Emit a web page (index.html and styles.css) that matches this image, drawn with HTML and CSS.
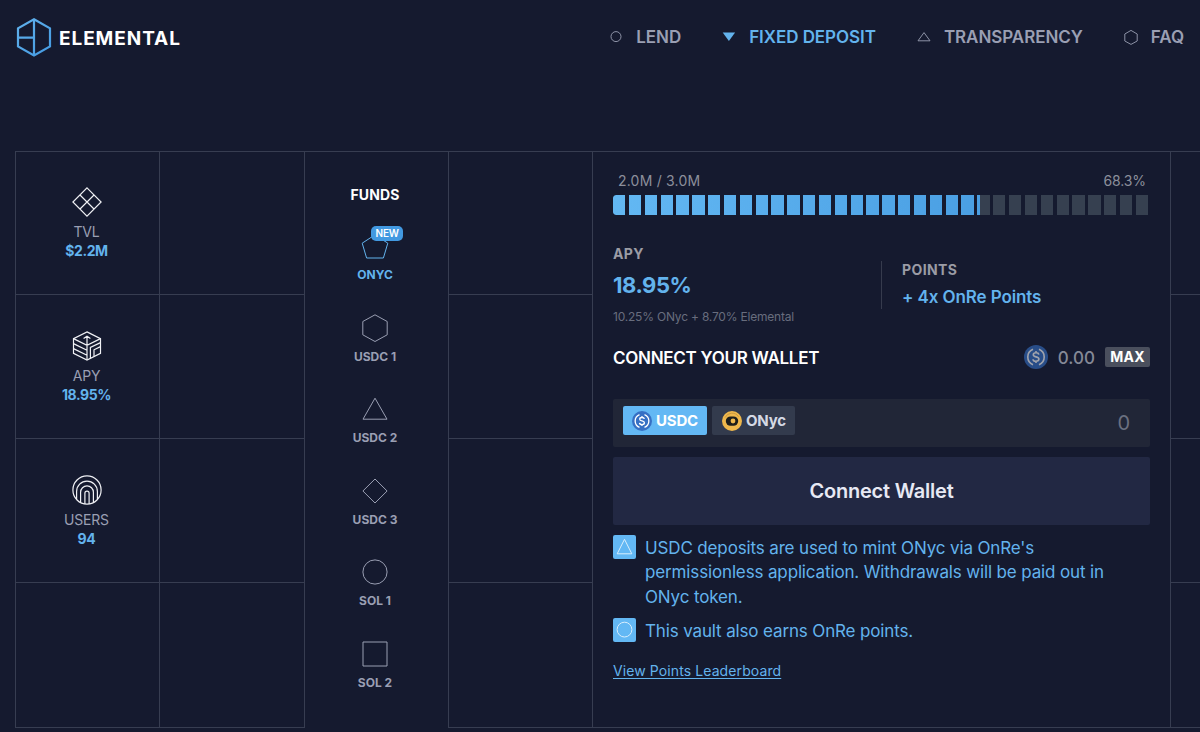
FILE: index.html
```html
<!DOCTYPE html>
<html lang="en">
<head>
    <meta charset="UTF-8">
    <meta name="viewport" content="width=device-width, initial-scale=1.0">
    <title>Elemental - Fixed Deposit</title>
    <link rel="stylesheet" href="styles.css">
</head>
<body>
    <header class="header">
        <a class="logo" href="#">
            <svg width="36" height="40" viewBox="0 0 36 40" fill="none" stroke="url(#logoFill)" stroke-width="2.2">
                <defs>
                    <linearGradient id="logoFill" gradientUnits="userSpaceOnUse" x1="0" y1="0" x2="36" y2="40">
                        <stop offset="0" stop-color="#63b3ed"/>
                        <stop offset="1" stop-color="#4299e1"/>
                    </linearGradient>
                </defs>
                <path d="M18 2.3 34 11.3V29.4L18 38.4 2 29.4V11.3Z"/>
                <path d="M18 2.3V38.4M2 20.7H18"/>
            </svg>
            <span>ELEMENTAL</span>
        </a>
        <nav class="nav">
            <a href="#">
                <svg width="14" height="14" viewBox="0 0 14 14"><circle cx="7" cy="6.6" r="5"/></svg>
                <span>LEND</span>
            </a>
            <a href="#" class="active">
                <svg width="14" height="14" viewBox="0 0 14 14"><path d="M.7 2.4h12.4L6.9 11Z"/></svg>
                <span>FIXED DEPOSIT</span>
            </a>
            <a href="#">
                <svg width="14" height="14" viewBox="0 0 14 14"><path d="M7 2.6 13 10.8H1Z"/></svg>
                <span>TRANSPARENCY</span>
            </a>
            <a href="#">
                <svg width="14" height="16" viewBox="0 0 14 16"><path d="M7 1.4 13.2 5V12L7 15.4.8 12V5Z"/></svg>
                <span>FAQ</span>
            </a>
        </nav>
    </header>

    <main class="board">
        <div class="col">
            <div class="cell stat">
                <svg width="30" height="30" viewBox="0 0 30 30"><path d="M15 .9 29.1 15 15 29.1.9 15ZM8 8l14 14M22 8 8 22"/></svg>
                <span class="stat-label">TVL</span>
                <strong>$2.2M</strong>
            </div>
            <div class="cell stat">
                <svg width="30" height="30" viewBox="0 0 30 30">
                    <path d="M15 .9 28.5 7.6V22.4L15 29.1 1.5 22.4V7.6Z"/>
                    <path d="M1.5 7.6 15 14.3 28.5 7.6M15 5.2V29M11.6 7.4 15 5.2 18.4 7.4M1.5 12.6 15 19.3M1.5 17.6 15 24.3M18.4 27.2V16.4L28.5 11.6M22 25.5V18.8L28.5 15.6"/>
                </svg>
                <span class="stat-label">APY</span>
                <strong>18.95%</strong>
            </div>
            <div class="cell stat">
                <svg width="30" height="30" viewBox="0 0 30 30">
                    <circle cx="15" cy="15" r="14.1"/>
                    <path d="M4.6 24.4V16.5a10.4 10.4 0 0 1 20.8 0V24.4M8.6 27.4V17.3a6.4 6.4 0 0 1 12.8 0V27.4M12.9 29V18.3a2.1 2.1 0 0 1 4.2 0V29"/>
                </svg>
                <span class="stat-label">USERS</span>
                <strong>94</strong>
            </div>
            <div class="cell"></div>
        </div>

        <div class="col">
            <div class="cell"></div>
            <div class="cell"></div>
            <div class="cell"></div>
            <div class="cell"></div>
        </div>

        <div class="col funds">
            <h2>FUNDS</h2>
            <a href="#" class="fund active">
                <svg width="28" height="28" viewBox="0 0 28 28"><path d="M14 2.8 26.8 11.2 22.4 26H5.6L1.2 11.2Z"/></svg>
                <em class="badge">NEW</em>
                <span>ONYC</span>
            </a>
            <a href="#" class="fund">
                <svg width="28" height="28" viewBox="0 0 28 28"><path d="M14 .8 26.2 7.5V20.8L14 27.5 1.8 20.8V7.5Z"/></svg>
                <span>USDC 1</span>
            </a>
            <a href="#" class="fund">
                <svg width="28" height="28" viewBox="0 0 28 28"><path d="M14 3.2 26 24.2H2Z"/></svg>
                <span>USDC 2</span>
            </a>
            <a href="#" class="fund">
                <svg width="28" height="28" viewBox="0 0 28 28"><path d="M14 2 26.1 14 14 26 1.9 14Z"/></svg>
                <span>USDC 3</span>
            </a>
            <a href="#" class="fund">
                <svg width="28" height="28" viewBox="0 0 28 28"><circle cx="14" cy="14" r="12.1"/></svg>
                <span>SOL 1</span>
            </a>
            <a href="#" class="fund">
                <svg width="28" height="28" viewBox="0 0 28 28"><path d="M2 2H26V26H2Z"/></svg>
                <span>SOL 2</span>
            </a>
        </div>

        <div class="col">
            <div class="cell"></div>
            <div class="cell"></div>
            <div class="cell"></div>
            <div class="cell"></div>
        </div>

        <section class="col panel">
            <div class="cap">
                <span>2.0M / 3.0M</span>
                <span class="cap-percent">68.3%</span>
            </div>
            <div class="progress"><div class="progress-fill" style="width: 68.3%"></div></div>

            <div class="rates">
                <div class="rate">
                    <h3>APY</h3>
                    <p class="rate-value">18.95%</p>
                    <p class="rate-note">10.25% ONyc + 8.70% Elemental</p>
                </div>
                <div class="points">
                    <h3>POINTS</h3>
                    <p class="points-value">+ 4x OnRe Points</p>
                </div>
            </div>

            <div class="wallet">
                <h4>CONNECT YOUR WALLET</h4>
                <svg class="coin dim" width="24" height="24" viewBox="0 0 24 24">
                    <circle class="coin-bg" cx="12" cy="12" r="12"/>
                    <path d="M9 4.3a8.3 8.3 0 0 0 0 15.4M15 4.3a8.3 8.3 0 0 1 0 15.4M14.8 9.6C14.6 8.3 13.5 7.8 12 7.8c-1.7 0-2.7.8-2.7 2 0 3 5.6 1.2 5.6 4.3 0 1.4-1.2 2.2-2.9 2.2-1.7 0-2.9-.7-3-2.1M12 6v1.8M12 16.3V18"/>
                </svg>
                <span class="balance">0.00</span>
                <button class="max">MAX</button>
            </div>

            <div class="amount">
                <button class="token active">
                    <svg class="coin" width="20" height="20" viewBox="0 0 24 24">
                        <circle class="coin-bg" cx="12" cy="12" r="12"/>
                        <path d="M9 4.3a8.3 8.3 0 0 0 0 15.4M15 4.3a8.3 8.3 0 0 1 0 15.4M14.8 9.6C14.6 8.3 13.5 7.8 12 7.8c-1.7 0-2.7.8-2.7 2 0 3 5.6 1.2 5.6 4.3 0 1.4-1.2 2.2-2.9 2.2-1.7 0-2.9-.7-3-2.1M12 6v1.8M12 16.3V18"/>
                    </svg>
                    <span>USDC</span>
                </button>
                <button class="token">
                    <svg width="20" height="20" viewBox="0 0 20 20">
                        <circle cx="10" cy="10" r="10" fill="#efb84c"/>
                        <path d="M3 6.6A7.8 7.8 0 0 1 16.6 5.8" fill="none" stroke="#b98a38" stroke-width=".7"/>
                        <rect x="3.8" y="5.4" width="12.4" height="9.4" rx="4.7" fill="#1d1e1b"/>
                        <circle cx="11" cy="10" r="2.4" fill="#efb84c"/>
                    </svg>
                    <span>ONyc</span>
                </button>
                <span class="amount-value">0</span>
            </div>

            <button class="connect">Connect Wallet</button>

            <div class="note">
                <svg width="23" height="24" viewBox="0 0 23 24"><path d="M11.5 4.3 18.8 18.8H4.2Z"/></svg>
                <p>USDC deposits are used to mint ONyc via OnRe's<br>permissionless application. Withdrawals will be paid out in<br>ONyc token.</p>
            </div>
            <div class="note">
                <svg width="23" height="24" viewBox="0 0 23 24"><circle cx="11.5" cy="11.6" r="7.4"/></svg>
                <p>This vault also earns OnRe points.</p>
            </div>
            <a class="leaderboard" href="#">View Points Leaderboard</a>
        </section>

        <div class="col">
            <div class="cell"></div>
            <div class="cell"></div>
            <div class="cell"></div>
            <div class="cell"></div>
        </div>
    </main>
</body>
</html>
```
FILE: styles.css
```css
:root {
    --bg: #151a2f;
    --line: #373d51;
    --blue: #63b3ed;
    --muted: #9a9fb3;
    --white: #ffffff;
}

* {
    margin: 0;
    padding: 0;
    box-sizing: border-box;
}

body {
    background: var(--bg);
    color: var(--white);
    font-family: Inter, "Liberation Sans", sans-serif;
    height: 732px;
    overflow: hidden;
}

a {
    color: inherit;
    text-decoration: none;
}

svg {
    display: block;
    flex: none;
}

button {
    border: none;
    color: inherit;
    font-family: inherit;
    cursor: pointer;
}

/* Header */
.header {
    display: flex;
    justify-content: space-between;
    align-items: center;
    height: 74px;
    padding: 0 16px;
    margin-bottom: 77px;
}

.logo {
    display: flex;
    align-items: center;
    gap: 7px;
    font-size: 19px;
    font-weight: 700;
    letter-spacing: 0.93px;
}

.logo span {
    padding-top: 2px;
}

.nav {
    display: flex;
    gap: 41px;
    font-size: 17px;
    font-weight: 600;
    line-height: 24px;
    letter-spacing: -0.05px;
    color: var(--muted);
}

.nav a {
    display: flex;
    align-items: center;
    gap: 13px;
}

.nav svg {
    fill: none;
    stroke: currentColor;
    stroke-width: 0.9;
}

.nav .active {
    color: var(--blue);
}

.nav .active svg {
    fill: currentColor;
    stroke: none;
}

/* Board */
.board {
    display: grid;
    grid-template-columns: 144px 145px 144px 144px 578px 1fr;
    height: 577px;
    margin-left: 15px;
    border-top: 1px solid var(--line);
}

.col {
    display: grid;
    grid-template-rows: 143px 144px 144px 145px;
    border-left: 1px solid var(--line);
    min-width: 0;
}

.cell {
    border-bottom: 1px solid var(--line);
}

/* Stats */
.stat {
    display: flex;
    flex-direction: column;
    align-items: center;
    padding: 36px 2px 0 0;
    font-size: 14px;
    line-height: 19px;
    letter-spacing: -0.2px;
}

.stat:first-child {
    padding-top: 35px;
}

.stat svg {
    fill: none;
    stroke: #f0f1f5;
    stroke-width: 1.2;
    margin-bottom: 5px;
}

.stat-label {
    color: var(--muted);
}

.stat strong {
    color: var(--blue);
    letter-spacing: -0.4px;
}

/* Funds */
.funds {
    display: flex;
    flex-direction: column;
    align-items: center;
    padding: 33px 3px 0 0;
}

.funds h2 {
    font-size: 14px;
    line-height: 20px;
    letter-spacing: 0.1px;
    margin-bottom: 27px;
}

.fund {
    position: relative;
    display: flex;
    flex-direction: column;
    align-items: center;
    gap: 6px;
    height: 81.6px;
    font-size: 12px;
    font-weight: 700;
    line-height: 17px;
    color: var(--muted);
}

.fund svg {
    fill: none;
    stroke: currentColor;
    stroke-width: 1;
}

.fund.active {
    color: var(--blue);
}

.badge {
    position: absolute;
    top: -6px;
    left: 14px;
    width: 32px;
    height: 15px;
    border-radius: 5px;
    background: #4299e1;
    color: var(--white);
    font-size: 10px;
    font-style: normal;
    font-weight: 600;
    line-height: 15px;
    letter-spacing: -0.2px;
    text-align: center;
}

/* Deposit panel */
.panel {
    display: block;
    padding: 18px 20px 0;
    border-bottom: 1px solid var(--line);
}

.cap {
    display: flex;
    justify-content: space-between;
    padding: 0 4px 0 5px;
    font-size: 14px;
    line-height: 22px;
    letter-spacing: 0.2px;
    color: #8c8f9b;
}

.cap-percent {
    letter-spacing: -0.1px;
}

.progress {
    height: 20px;
    margin-top: 3px;
    border-radius: 3px 0 0 3px;
    background: #364050;
    overflow: hidden;
    -webkit-mask: repeating-linear-gradient(90deg, #000 0 12.3px, transparent 12.3px 15.84px);
    mask: repeating-linear-gradient(90deg, #000 0 12.3px, transparent 12.3px 15.84px);
}

.progress-fill {
    height: 100%;
    background: linear-gradient(90deg, #63b8f3, #4a9fe3);
}

.rates {
    display: grid;
    grid-template-columns: 268px 1fr;
    height: 112px;
    margin-top: 28px;
}

h3 {
    font-size: 14px;
    font-weight: 700;
    line-height: 20px;
    letter-spacing: 0.4px;
    color: #9b9ca5;
}

.rate h3 {
    padding-top: 1px;
}

.rate-value {
    margin-top: 4px;
    font-size: 22px;
    font-weight: 700;
    line-height: 34px;
    letter-spacing: -0.45px;
    color: var(--blue);
}

.rate-note {
    margin-top: 6px;
    font-size: 12px;
    line-height: 18px;
    letter-spacing: -0.2px;
    color: #686d7e;
}

.points {
    height: 48px;
    margin-top: 18px;
    padding-left: 20px;
    border-left: 1px solid #363b4d;
}

.points h3 {
    line-height: 18px;
}

.points-value {
    margin-top: 6px;
    font-size: 17px;
    font-weight: 600;
    line-height: 24px;
    letter-spacing: -0.1px;
    color: var(--blue);
}

.wallet {
    display: flex;
    align-items: center;
    height: 24px;
    margin-top: -10px;
}

.wallet h4 {
    margin-right: auto;
    padding-top: 1px;
    font-size: 17px;
    font-weight: 600;
    letter-spacing: -0.28px;
}

.coin path {
    fill: none;
    stroke: #ffffff;
    stroke-width: 1.6;
}

.coin-bg {
    fill: #3670c4;
}

.coin.dim {
    opacity: 0.6;
}

.balance {
    margin: 0 10px;
    padding-top: 1px;
    font-size: 17px;
    font-weight: 500;
    color: #858997;
}

.max {
    width: 45px;
    height: 20px;
    border-radius: 2px;
    background: #4a4f5d;
    font-size: 14px;
    font-weight: 700;
    line-height: 20px;
    letter-spacing: 0.2px;
}

.amount {
    display: flex;
    align-items: flex-start;
    gap: 5px;
    height: 48px;
    margin-top: 30px;
    padding: 7px 20px 0 10px;
    border-radius: 2px;
    background: #212637;
}

.token {
    display: flex;
    align-items: center;
    gap: 4px;
    width: 83px;
    height: 29px;
    padding-left: 10px;
    border-radius: 2px;
    background: #333b4d;
    color: #d4d9e4;
    font-size: 15px;
    font-weight: 700;
    letter-spacing: -0.2px;
}

.token.active {
    width: 84px;
    padding-left: 9px;
    background: #63b8f4;
    color: var(--white);
}

.amount-value {
    margin-left: auto;
    font-size: 20px;
    line-height: 34px;
    color: #6b7080;
}

.connect {
    display: block;
    width: 100%;
    height: 68px;
    margin: 10px 0;
    border-radius: 2px;
    background: #222843;
    color: #e7e9f4;
    font-size: 20px;
    font-weight: 600;
    letter-spacing: -0.22px;
}

.note {
    display: flex;
    gap: 9px;
    margin-bottom: 10px;
    font-size: 17px;
    line-height: 24.3px;
    letter-spacing: -0.14px;
    color: var(--blue);
}

.note p {
    position: relative;
    top: 1px;
}

.note svg {
    border-radius: 2px;
    background: #63b8f4;
    fill: none;
    stroke: #d8eefd;
    stroke-width: 1;
}

.leaderboard {
    display: inline-block;
    margin-top: 9px;
    color: var(--blue);
    font-size: 14px;
    line-height: 20px;
    letter-spacing: 0.1px;
    text-decoration: underline;
    text-underline-offset: 2px;
}
```
